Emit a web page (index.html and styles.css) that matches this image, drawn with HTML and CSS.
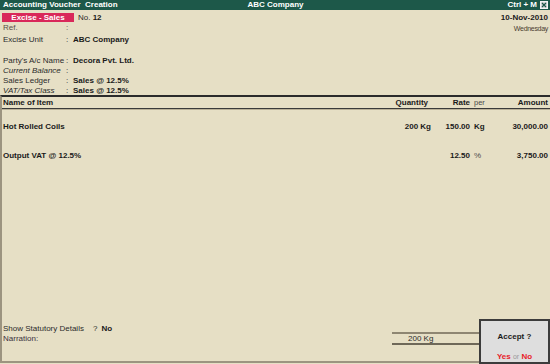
FILE: index.html
```html
<!DOCTYPE html>
<html lang="en">

<head>
  <meta charset="UTF-8" />
  <meta name="viewport" content="width=device-width, initial-scale=1.0" />
  <title>Accounting Voucher Creation</title>
  <link rel="stylesheet" href="styles.css">
</head>

<body>
  <div class="screen">
    <div class="titlebar">
      <span class="title-left">Accounting Voucher&nbsp; Creation</span>
      <span class="title-mid">ABC Company</span>
      <span class="title-right">Ctrl + M
        <svg class="close" width="8" height="8" viewBox="0 0 8 8">
          <rect x="0.5" y="0.5" width="7" height="7" fill="#d8d8d8" stroke="#f4f4f4" />
          <path d="M2 2 L6 6 M6 2 L2 6" stroke="#1d5849" stroke-width="1.2" />
        </svg>
      </span>
    </div>

    <div class="head">
      <div class="head-left">
        <div class="vrow">
          <span class="vtype">Excise - Sales</span>
          <span class="vno">No. <b>12</b></span>
        </div>
        <div class="field ref">
          <span class="lbl">Ref.</span><span class="colon">:</span>
        </div>
        <div class="fields unit">
          <span class="lbl">Excise Unit</span><span class="colon">:</span><b>ABC Company</b>
        </div>
        <div class="fields party">
          <span class="lbl">Party's A/c Name</span><span class="colon">:</span><b>Decora Pvt. Ltd.</b>
          <span class="lbl it">Current Balance</span><span class="colon">:</span><b></b>
          <span class="lbl">Sales Ledger</span><span class="colon">:</span><b>Sales @ 12.5%</b>
          <span class="lbl it">VAT/Tax Class</span><span class="colon">:</span><b>Sales @ 12.5%</b>
        </div>
      </div>
      <div class="head-right">
        <div class="date">10-Nov-2010</div>
        <div class="day">Wednesday</div>
      </div>
    </div>

    <div class="sheet">
      <div class="items-head">
        <span class="c-name">Name of Item</span>
        <span class="c-qty">Quantity</span>
        <span class="c-rate">Rate</span>
        <span class="c-per">per</span>
        <span class="c-amt">Amount</span>
      </div>

      <div class="items">
        <div class="item first">
          <span class="c-name">Hot Rolled Coils</span>
          <span class="c-qty">200 Kg</span>
          <span class="c-rate">150.00</span>
          <span class="c-per">Kg</span>
          <span class="c-amt">30,000.00</span>
        </div>
        <div class="item second">
          <span class="c-name">Output VAT @ 12.5%</span>
          <span class="c-qty"></span>
          <span class="c-rate">12.50</span>
          <span class="c-per">%</span>
          <span class="c-amt">3,750.00</span>
        </div>
      </div>

      <div class="footer">
        <div class="foot-left">
          <div class="stat"><span class="stat-lbl">Show Statutory Details</span><span class="q">?</span><b>No</b></div>
          <div class="narr">Narration:</div>
        </div>
        <div class="total">200 Kg</div>
      </div>
    </div>

    <div class="accept">
      <div class="accept-q">Accept ?</div>
      <div class="accept-a"><span class="yn">Yes</span> <span class="or">or</span> <span class="yn">No</span></div>
    </div>
  </div>
</body>

</html>
```

FILE: styles.css
```css
* {
  box-sizing: border-box;
}

body {
  margin: 0;
  background-color: #e6dfc5;
  font-family: "Liberation Sans", Arial, sans-serif;
  font-size: 8px;
  color: #2b2b2b;
}

b {
  color: #1a1a1a;
}

.screen {
  position: relative;
  width: 550px;
  height: 364px;
  display: flex;
  flex-direction: column;
  overflow: hidden;
}

/* title bar */
.titlebar {
  height: 10px;
  background-color: #1d5849;
  color: #ffffff;
  font-weight: bold;
  line-height: 10px;
  display: grid;
  grid-template-columns: 1fr auto 1fr;
  padding: 0 2px 0 3px;
}

.title-right {
  display: flex;
  justify-content: flex-end;
  align-items: center;
  gap: 3px;
}

.close {
  display: block;
}

/* voucher head */
.head {
  display: flex;
  justify-content: space-between;
  padding: 0 2px 0 2px;
  height: 85px;
}

.vrow {
  margin-top: 3px;
  display: flex;
  align-items: center;
  line-height: 9px;
  height: 9px;
}

.vtype {
  width: 72px;
  background-color: #d9285a;
  color: #ffffff;
  font-weight: bold;
  text-align: center;
}

.vno {
  margin-left: 4px;
}

.field,
.fields {
  display: grid;
  grid-template-columns: 63px 7px auto;
  line-height: 10px;
  padding-left: 1px;
}

.lbl {
  white-space: nowrap;
}

.ref {
  margin-top: 1px;
  color: #5a5048;
}

.unit {
  margin-top: 2px;
}

.party {
  margin-top: 11px;
}

.colon {
  text-align: left;
}

.it {
  font-style: italic;
}

.head-right {
  text-align: right;
  padding-top: 3px;
}

.date {
  font-weight: bold;
  color: #1a1a1a;
  line-height: 10px;
}

.day {
  font-size: 7px;
  letter-spacing: -0.3px;
  color: #4a3c30;
  line-height: 11px;
}

/* item area */
.sheet {
  flex: 1;
  display: flex;
  flex-direction: column;
  border-top: 2px solid #2b2b2b;
  border-left: 2px solid #9c9480;
  border-bottom: 2px solid #9c9480;
  margin-bottom: 1px;
}

.items-head,
.item {
  display: grid;
  grid-template-columns: 1fr 60px 39px 20px 58px;
  padding: 0 2px 0 1px;
  line-height: 9px;
}

.items-head {
  font-weight: bold;
  color: #1a1a1a;
  padding-top: 1px;
  padding-bottom: 1px;
  border-bottom: 1px solid #3a3a3a;
  box-shadow: 0 1px 0 #b9b097;
}

.c-qty,
.c-rate,
.c-amt {
  text-align: right;
}

.c-per {
  padding-left: 4px;
}

.items-head .c-qty {
  padding-right: 3px;
}

.items-head .c-per {
  font-weight: normal;
  color: #4a4a4a;
  font-size: 7.5px;
}

.items {
  flex: 1;
}

.item {
  font-weight: bold;
  color: #1a1a1a;
  line-height: 10px;
}

.item .c-per {
  font-weight: bold;
}

.item.second .c-per {
  font-weight: normal;
  color: #4a4a4a;
}

.first {
  margin-top: 13px;
}

.second {
  margin-top: 19px;
}

/* footer */
.footer {
  display: flex;
  align-items: flex-end;
  padding: 0 0 18px 1px;
}

.foot-left {
  width: 389px;
  line-height: 10px;
  margin-bottom: -1px;
}

.stat-lbl {
  display: inline-block;
  width: 90px;
}

.q {
  margin-right: 4px;
}

.narr {
  color: #3a3040;
}

.total {
  width: 90px;
  line-height: 9px;
  padding-left: 16px;
  border-top: 2px solid #8e8672;
  border-bottom: 2px solid #6e6858;
  margin-bottom: -2px;
}

/* accept popup */
.accept {
  position: absolute;
  right: 0;
  bottom: 0;
  width: 71px;
  height: 45px;
  background-color: #dedede;
  border: 2px solid #3c3c3c;
  text-align: center;
}

.accept-q {
  font-weight: bold;
  color: #1a1a1a;
  margin-top: 11px;
}

.accept-a {
  margin-top: 11px;
}

.yn {
  color: #e8202a;
  font-weight: bold;
}

.or {
  color: #9a9a9a;
  font-size: 7px;
}
```
